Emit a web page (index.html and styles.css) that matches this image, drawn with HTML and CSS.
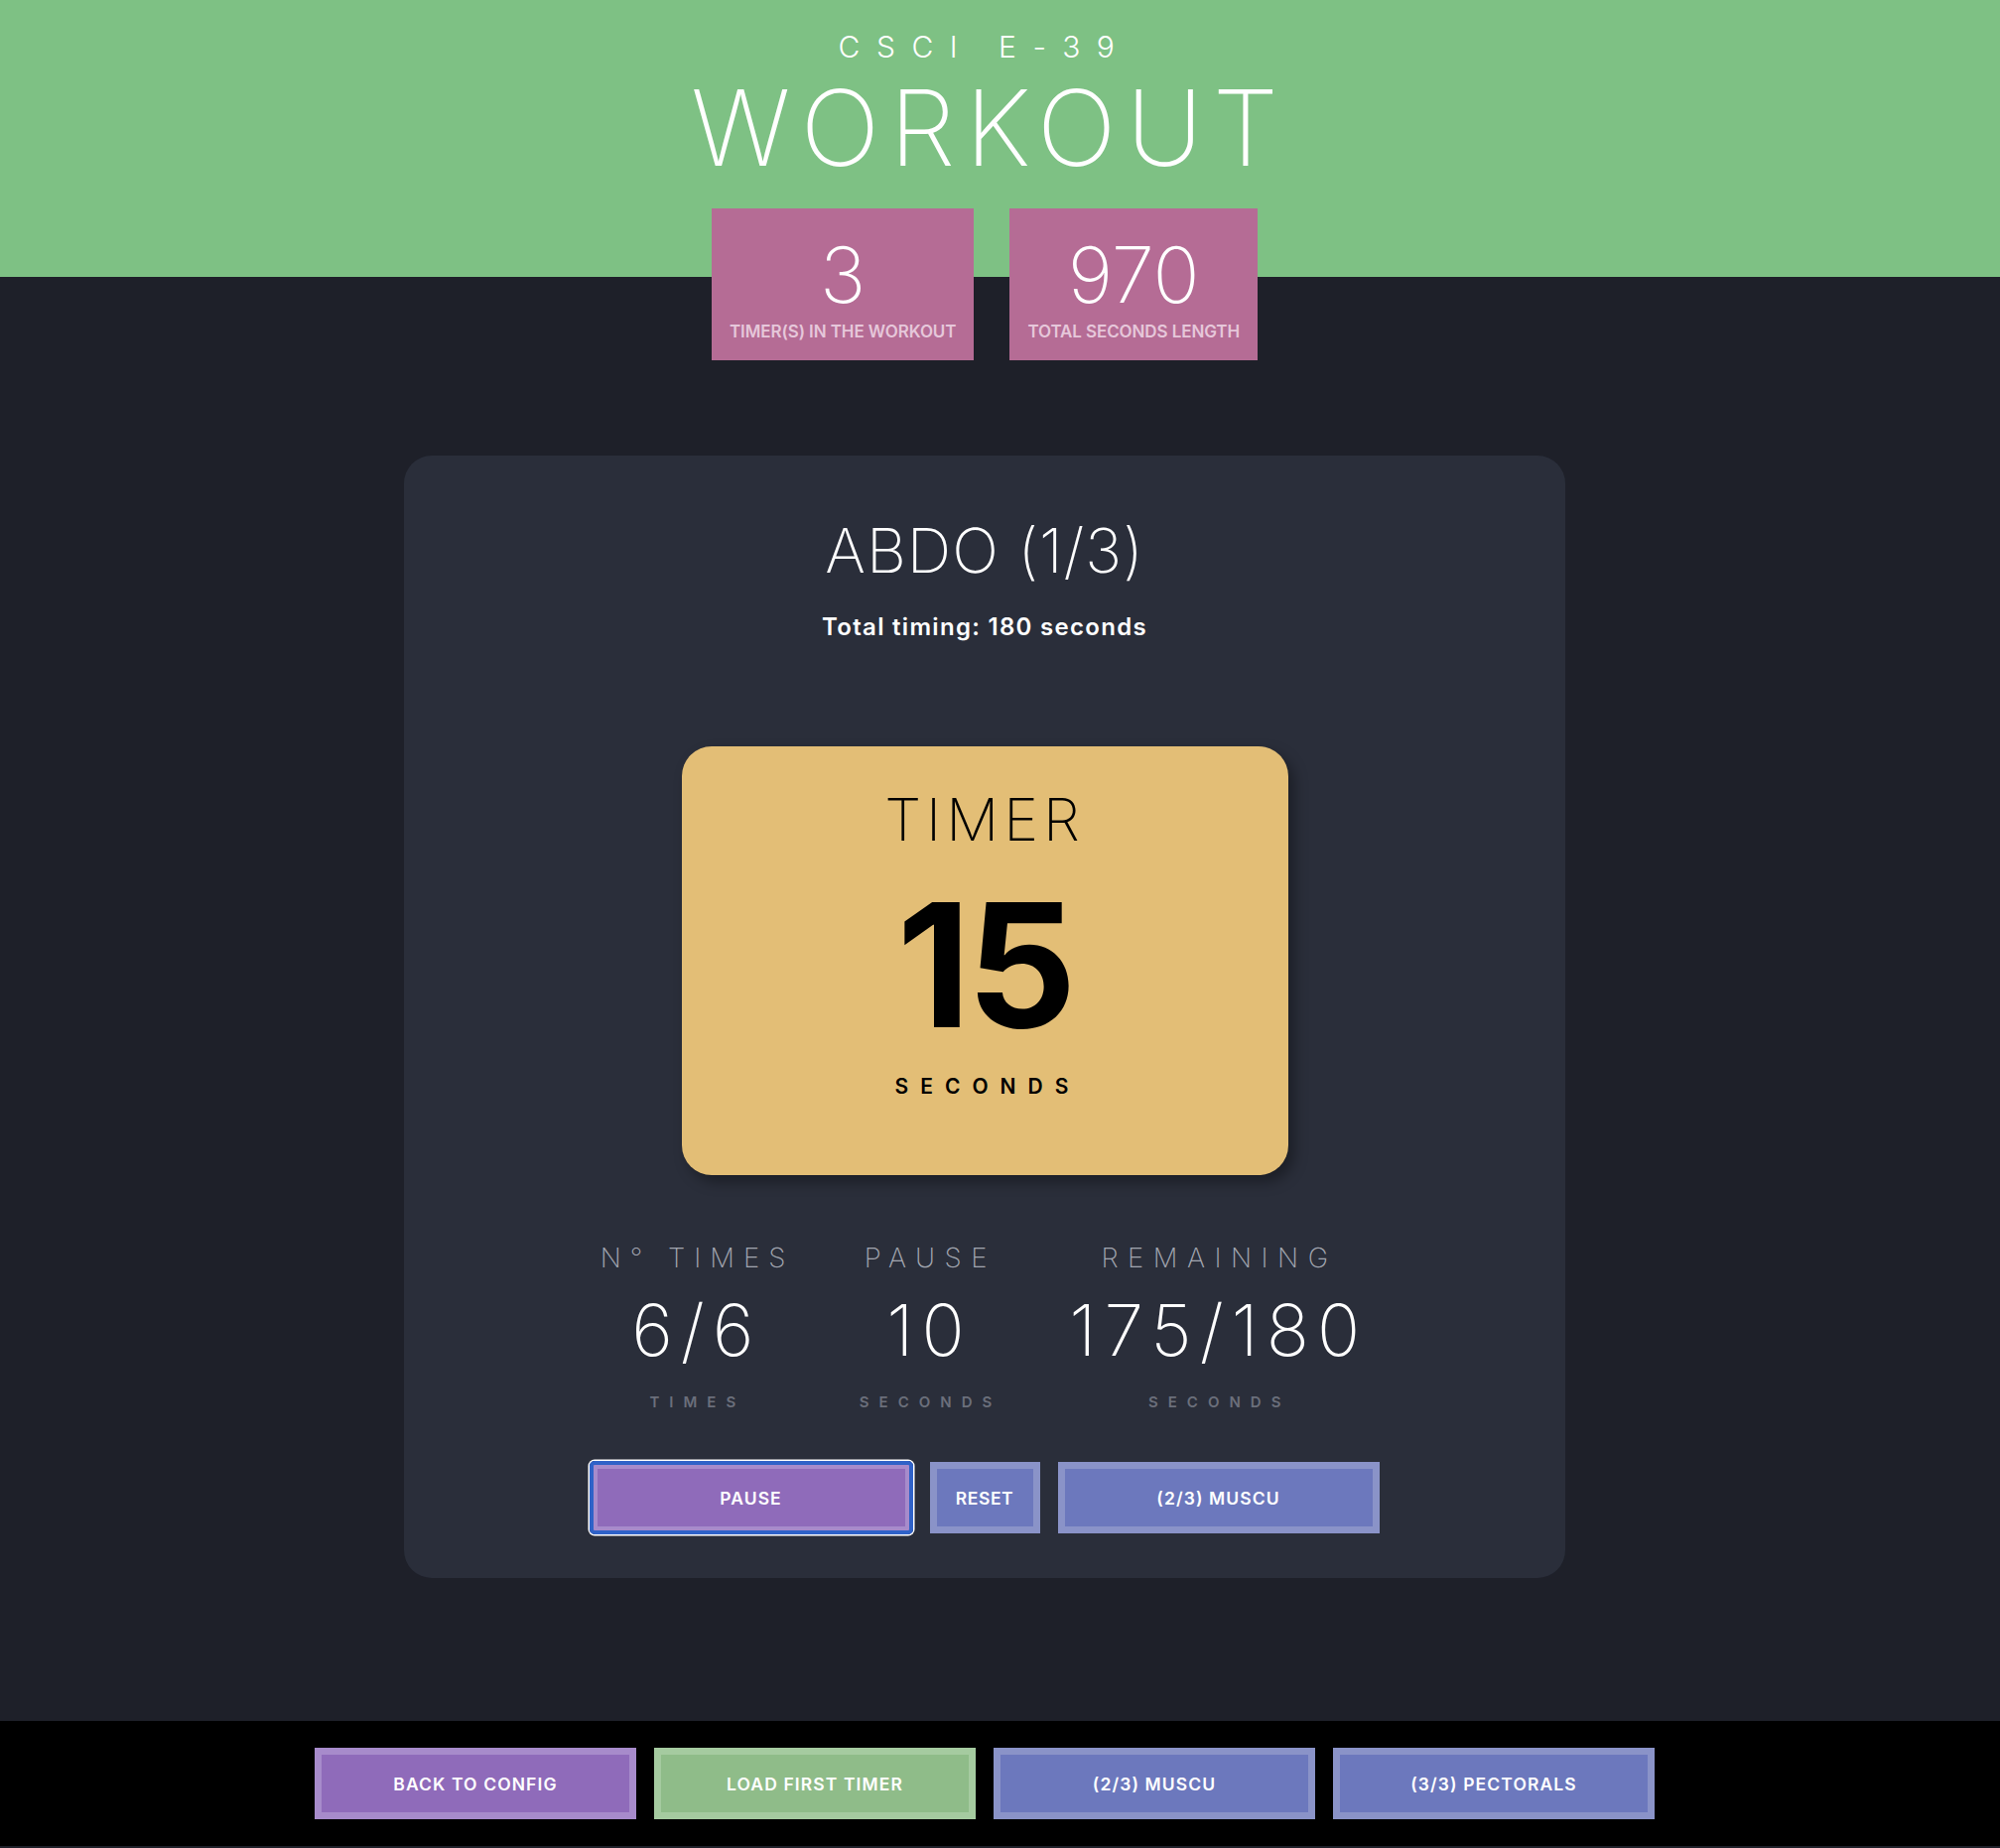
FILE: index.html
```html
<!DOCTYPE html>
<html lang="en">
<head>
<meta charset="utf-8">
<title>Workout</title>
<link rel="stylesheet" href="styles.css">
</head>
<body>
<header class="top">
  <div class="inner">
    <div class="subtitle">CSCI E-39</div>
    <h1 class="title">WORKOUT</h1>
    <div class="summary">
      <div class="summary-box box-a">
        <div class="summary-num">3</div>
        <div class="summary-label">TIMER(S) IN THE WORKOUT</div>
      </div>
      <div class="summary-box box-b">
        <div class="summary-num">970</div>
        <div class="summary-label">TOTAL SECONDS LENGTH</div>
      </div>
    </div>
  </div>
</header>

<main class="main">
  <div class="inner">
    <section class="card">
      <h2 class="card-title">ABDO (1/3)</h2>
      <div class="card-sub">Total timing: 180 seconds</div>

      <div class="timer">
        <div class="timer-head">TIMER</div>
        <div class="timer-num">15</div>
        <div class="timer-unit">SECONDS</div>
      </div>

      <div class="stats">
        <div class="stat stat-a">
          <div class="stat-label">N° TIMES</div>
          <div class="stat-value">6/6</div>
          <div class="stat-unit">TIMES</div>
        </div>
        <div class="stat stat-b">
          <div class="stat-label">PAUSE</div>
          <div class="stat-value">10</div>
          <div class="stat-unit">SECONDS</div>
        </div>
        <div class="stat stat-c">
          <div class="stat-label">REMAINING</div>
          <div class="stat-value">175/180</div>
          <div class="stat-unit">SECONDS</div>
        </div>
      </div>

      <div class="actions">
        <button class="btn btn-purple btn-wide is-focused">PAUSE</button>
        <button class="btn btn-blue btn-reset">RESET</button>
        <button class="btn btn-blue btn-wide">(2/3) MUSCU</button>
      </div>
    </section>
  </div>
</main>

<footer class="bottom">
  <div class="inner footer-row">
    <button class="btn btn-purple btn-wide">BACK TO CONFIG</button>
    <button class="btn btn-green btn-wide">LOAD FIRST TIMER</button>
    <button class="btn btn-blue btn-wide">(2/3) MUSCU</button>
    <button class="btn btn-blue btn-wide">(3/3) PECTORALS</button>
  </div>
</footer>
</body>
</html>
```

FILE: styles.css
```css
* { box-sizing: border-box; }

html, body {
  margin: 0;
  padding: 0;
}

body {
  background: #1e2029;
  font-family: "Inter", "Noto Sans", "Liberation Sans", sans-serif;
  color: #ffffff;
  min-height: 1862px;
}

.inner {
  margin-right: 31px;
}

/* ---------- header ---------- */
.top {
  background: #7ec184;
  height: 279px;
  padding-top: 32px;
}

.top .inner {
  display: flex;
  flex-direction: column;
  align-items: center;
}

.subtitle {
  font-size: 30px;
  line-height: 1;
  font-weight: 300;
  letter-spacing: 16.5px;
  color: #ffffff;
}

.title {
  margin: 14px -10px 0 0;
  font-size: 106px;
  line-height: 1;
  font-weight: 200;
  letter-spacing: 10px;
  color: #ffffff;
}

.summary {
  margin-top: 28px;
  display: flex;
  gap: 36px;
  position: relative;
}

.summary-box {
  background: #b56c95;
  height: 153px;
  padding: 28px 18px 0 18px;
  display: flex;
  flex-direction: column;
  align-items: center;
}

.summary-num {
  font-size: 78px;
  line-height: 1;
  font-weight: 200;
  color: #ffffff;
}

.summary-label {
  margin-top: 10px;
  font-size: 17px;
  line-height: 1;
  font-weight: 600;
  letter-spacing: -0.1px;
  color: #e6c7da;
  white-space: nowrap;
}

/* ---------- main card ---------- */
.main {
  padding-top: 180px;
  padding-bottom: 144px;
}

.main .inner {
  display: flex;
  justify-content: center;
}

.card {
  width: 1170px;
  height: 1131px;
  background: #2a2e3a;
  border-radius: 28px;
  padding-top: 65px;
  display: flex;
  flex-direction: column;
  align-items: center;
}

.card-title {
  margin: 0;
  font-size: 62px;
  line-height: 1;
  font-weight: 200;
  letter-spacing: 1px;
  color: #ffffff;
}

.card-sub {
  margin-top: 34px;
  font-size: 24px;
  line-height: 1;
  font-weight: 600;
  letter-spacing: 1.3px;
  color: #ffffff;
}

.timer {
  margin-top: 108px;
  width: 611px;
  height: 432px;
  background: #e3be76;
  border-radius: 30px;
  box-shadow: 6px 7px 14px rgba(0, 0, 0, 0.35);
  padding-top: 44px;
  display: flex;
  flex-direction: column;
  align-items: center;
  color: #000000;
}

.timer-head {
  font-size: 59px;
  line-height: 1;
  font-weight: 200;
  letter-spacing: 5px;
}

.timer-num {
  margin-top: 31px;
  font-size: 173px;
  line-height: 1;
  font-weight: 700;
  letter-spacing: -4px;
}

.timer-unit {
  margin-top: 25px;
  font-size: 21px;
  line-height: 1;
  font-weight: 600;
  letter-spacing: 12px;
  margin-right: -6px;
}

.stats {
  margin-top: 70px;
  margin-right: 9px;
  display: flex;
  gap: 75px;
}

.stat {
  display: flex;
  flex-direction: column;
  align-items: center;
}

.stat-c { margin-left: 3px; }

.stat-label {
  font-size: 27.5px;
  line-height: 1;
  font-weight: 200;
  letter-spacing: 9.5px;
  margin-right: -9.5px;
  color: #a3a7b1;
}

.stat-a .stat-label { letter-spacing: 9px; }

.stat-value {
  margin-top: 23.5px;
  font-size: 71.5px;
  line-height: 1;
  font-weight: 200;
  letter-spacing: 8px;
  margin-right: -8px;
  color: #ffffff;
}

.stat-unit {
  margin-top: 28.5px;
  font-size: 15px;
  line-height: 1;
  font-weight: 600;
  letter-spacing: 10px;
  margin-right: -10px;
  color: #6b6f7b;
}

.actions {
  margin-top: 53px;
  display: flex;
  gap: 18px;
}

/* ---------- buttons ---------- */
.btn {
  position: relative;
  height: 72px;
  border: 7px solid;
  font-family: "Inter", "Noto Sans", "Liberation Sans", sans-serif;
  font-size: 17.5px;
  font-weight: 600;
  letter-spacing: 1.1px;
  color: #ffffff;
  padding: 0 12px;
  cursor: pointer;
  border-radius: 0;
}

.btn-wide { width: 324px; }
.btn-reset { width: 111px; padding: 0; letter-spacing: 0.6px; }

.btn-purple { background: #8f6bba; border-color: #a78bcb; }
.btn-blue { background: #6c78bd; border-color: #8a93c8; }
.btn-green { background: #8fbc89; border-color: #a5cba0; }

/* focus ring drawn over the focused button */
.is-focused::after {
  content: "";
  position: absolute;
  top: -8px;
  left: -8px;
  right: -8px;
  bottom: -8px;
  border: 4.5px solid #2f62c8;
  border-radius: 5px;
  box-shadow: 0 0 0 1.5px #ffffff;
  pointer-events: none;
}

/* ---------- footer ---------- */
.bottom {
  background: #000000;
  height: 126px;
  padding-top: 27px;
}

.footer-row {
  display: flex;
  justify-content: center;
  gap: 18px;
}
```
